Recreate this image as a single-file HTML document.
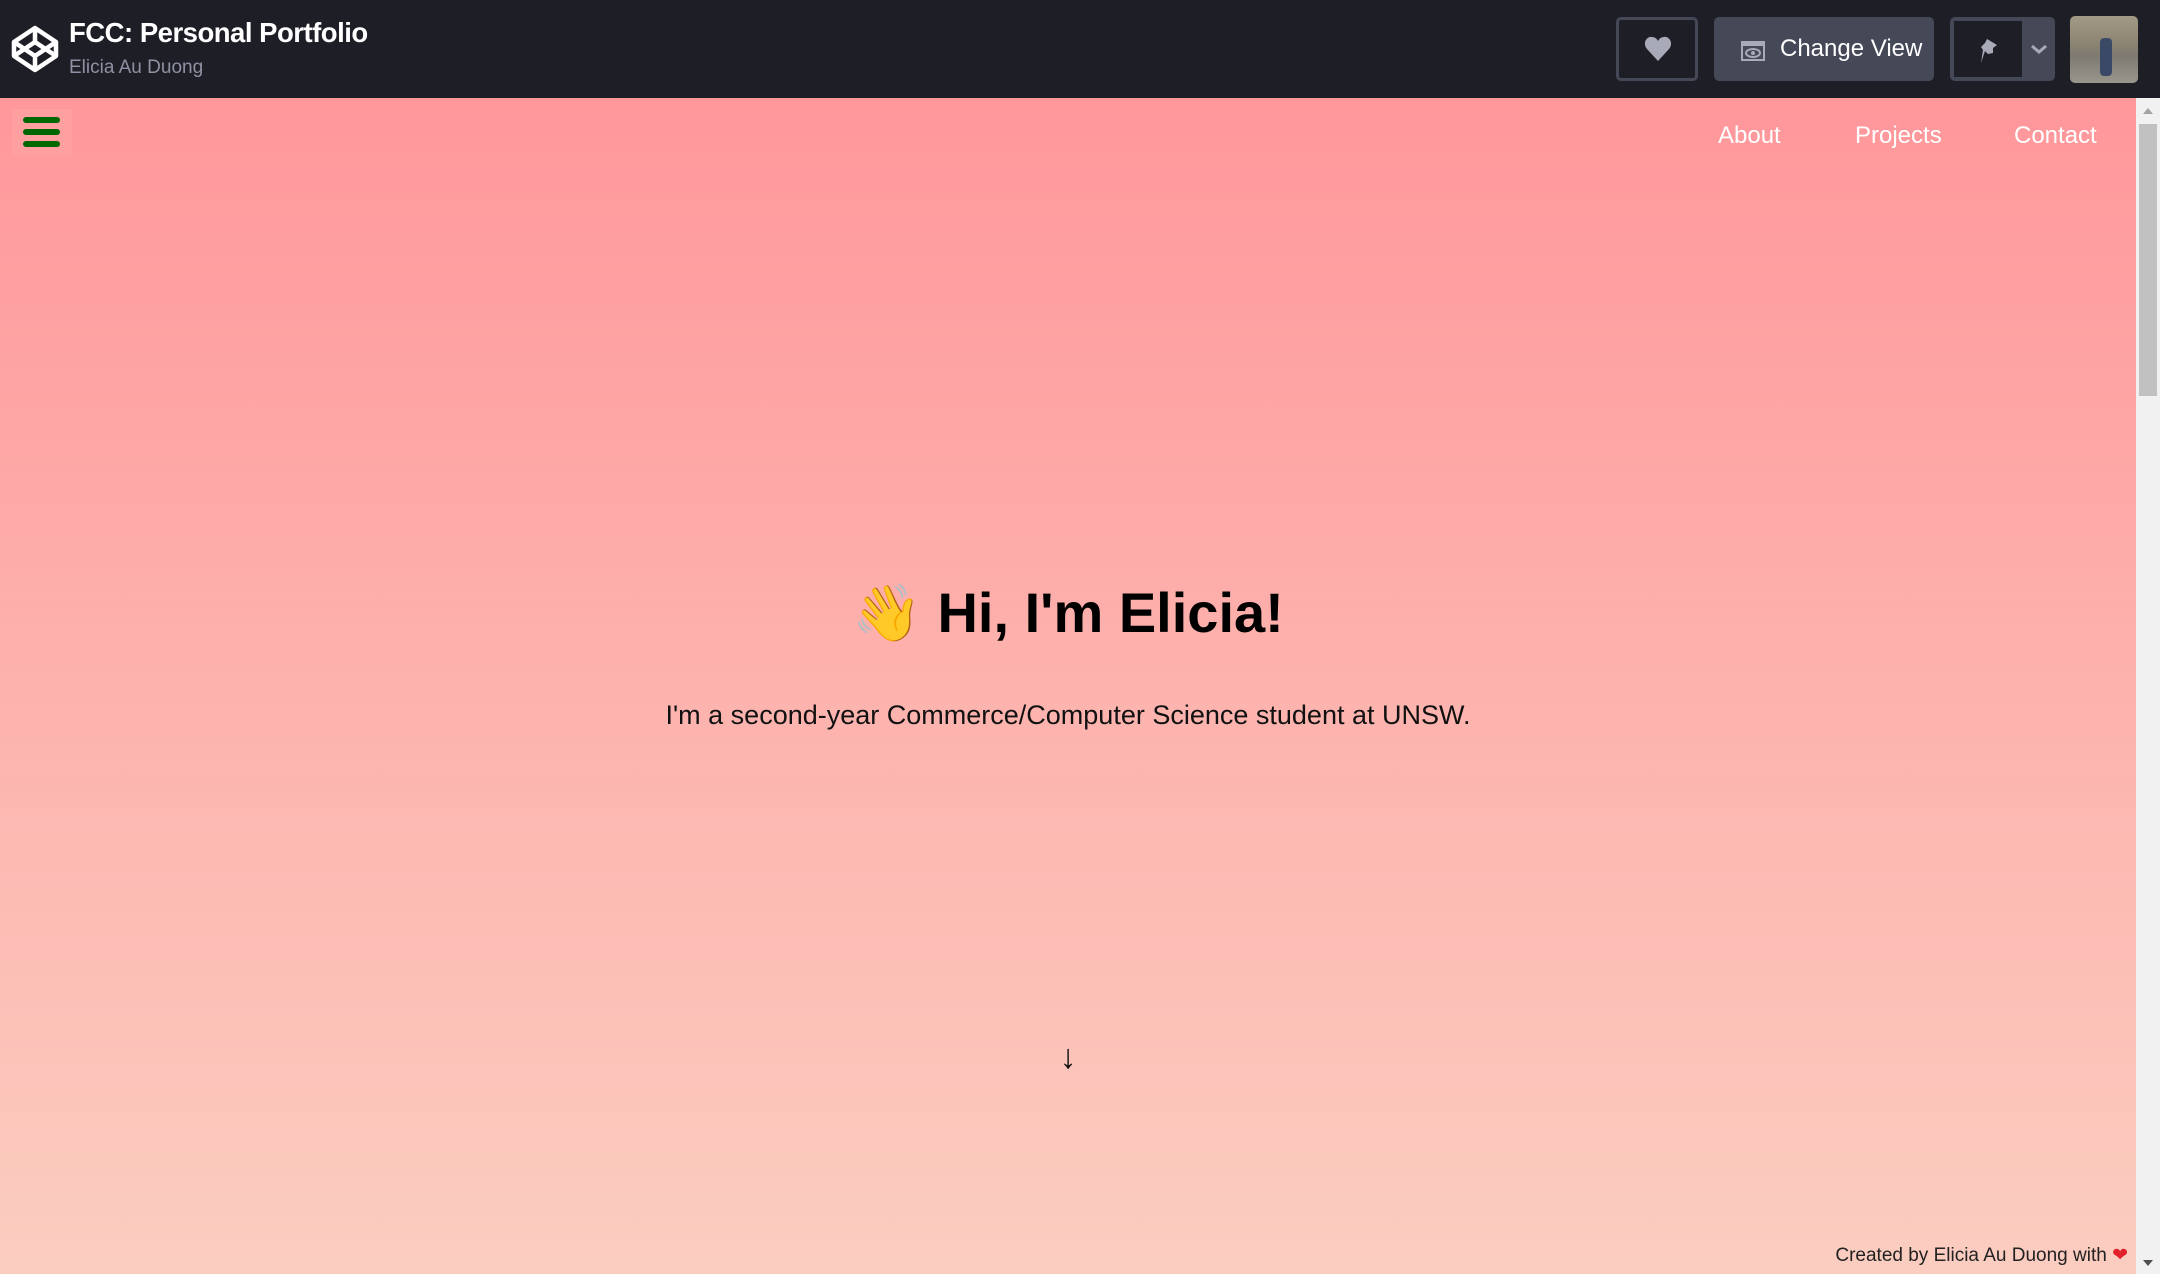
<!DOCTYPE html>
<html><head><meta charset="utf-8"><style>
*{margin:0;padding:0;box-sizing:border-box}
body{width:2160px;height:1274px;overflow:hidden;font-family:"Liberation Sans",sans-serif;background:#1e1f26;position:relative}
.hdr{position:absolute;left:0;top:0;width:2160px;height:98px;background:#1e1f26}
.t1{position:absolute;left:69px;top:17px;color:#fff;font-weight:bold;font-size:27.5px;letter-spacing:-0.5px}
.t2{position:absolute;left:69px;top:57px;color:#8e91a3;font-size:19px}
.btn{position:absolute;top:17px;height:64px;border-radius:5px}
.main{position:absolute;left:0;top:98px;width:2136px;height:1176px;background:linear-gradient(#ff979b,#fbcdc0)}
.sb{position:absolute;left:2136px;top:98px;width:24px;height:1176px;background:#f1f1f1}
.nav{position:absolute;top:122px;color:#fff;font-size:24px}
</style></head><body>
<div class="hdr">
<svg style="position:absolute;left:10px;top:24px" width="50" height="50" viewBox="0 0 50 50" fill="none" stroke="#fff" stroke-width="4.5" stroke-linejoin="round"><path d="M25 4 L46 18 L46 32 L25 46 L4 32 L4 18 Z M4 18 L25 32 L46 18 M4 32 L25 18 L46 32 M25 4 L25 18 M25 32 L25 46"/></svg>
<div class="t1">FCC: Personal Portfolio</div>
<div class="t2">Elicia Au Duong</div>
<div class="btn" style="left:1616px;width:82px;border:3px solid #454856"><svg style="position:absolute;left:25px;top:16px" width="28" height="26" viewBox="0 0 28 26"><path d="M14 25 L3 13 C-2 7 3 0 8 1 C11 1 13 3 14 5 C15 3 17 1 20 1 C25 0 30 7 25 13 Z" fill="#a8aab8"/></svg></div>
<div class="btn" style="left:1714px;width:220px;background:#444857;color:#fff;font-size:24px;line-height:64px;padding-left:66px">Change View
<svg style="position:absolute;left:27px;top:24px" width="24" height="20" viewBox="0 0 24 20"><rect x="1" y="1" width="22" height="18" fill="none" stroke="#a8aab8" stroke-width="2"/><rect x="1" y="1" width="22" height="4" fill="#a8aab8"/><ellipse cx="12" cy="12" rx="7" ry="4" fill="none" stroke="#a8aab8" stroke-width="2"/><circle cx="12" cy="12" r="2" fill="#a8aab8"/></svg></div>
<div class="btn" style="left:1950px;width:105px;background:#444857"><div style="position:absolute;left:4px;top:4px;width:68px;height:56px;background:#1e1f26"></div>
<svg style="position:absolute;left:28px;top:20px" width="22" height="28" viewBox="0 0 22 28"><path d="M9 2 L19 8 L15 11 L15 16 L10 17 L7 14 L3 26 L5 13 L3 10 L7 6 Z" fill="#a8aab8"/></svg>
<svg style="position:absolute;left:79px;top:26px" width="20" height="12" viewBox="0 0 20 12"><path d="M3 3 L10 9 L17 3" fill="none" stroke="#a8aab8" stroke-width="3"/></svg></div>
<div style="position:absolute;left:2070px;top:16px;width:68px;height:67px;border-radius:5px;background:linear-gradient(#a39a86 0%,#8d8573 40%,#7d7a72 60%,#9a968c 100%)"><div style="position:absolute;left:30px;top:22px;width:12px;height:38px;background:#3a4a66;border-radius:4px"></div></div>
</div>
<div class="main">
<div style="position:absolute;left:12px;top:11px;width:60px;height:46px;background:#ff9f9f"></div>
<div style="position:absolute;left:23px;top:19px;width:37px;height:6px;border-radius:3px;background:#006600"></div>
<div style="position:absolute;left:23px;top:31px;width:37px;height:6px;border-radius:3px;background:#006600"></div>
<div style="position:absolute;left:23px;top:43px;width:37px;height:6px;border-radius:3px;background:#006600"></div>
<div class="nav" style="left:1718px;top:24px">About</div>
<div class="nav" style="left:1855px;top:24px">Projects</div>
<div class="nav" style="left:2014px;top:24px">Contact</div>
<div style="position:absolute;left:0;width:2136px;top:482px;text-align:center;font-weight:bold;font-size:56px;color:#000"><span style="font-family:'Noto Color Emoji',sans-serif;font-size:56px">👋</span> Hi, I'm Elicia!</div>
<div style="position:absolute;left:0;width:2136px;top:602px;text-align:center;font-size:27px;color:#111">I'm a second-year Commerce/Computer Science student at UNSW.</div>
<div style="position:absolute;left:0;width:2136px;top:940px;text-align:center;font-size:34px;color:#111">↓</div>
<div style="position:absolute;right:8px;top:1146px;font-size:19px;color:#222">Created by Elicia Au Duong with <span style="color:#e0202a">❤</span></div>
</div>
<div class="sb"><div style="position:absolute;left:3px;top:26px;width:18px;height:272px;background:#c1c1c1"></div>
<div style="position:absolute;left:7px;top:10px;border:5px solid transparent;border-bottom:6px solid #a3a3a3;border-top:0"></div>
<div style="position:absolute;left:7px;top:1162px;border:5px solid transparent;border-top:6px solid #505050;border-bottom:0"></div></div>
</body></html>
